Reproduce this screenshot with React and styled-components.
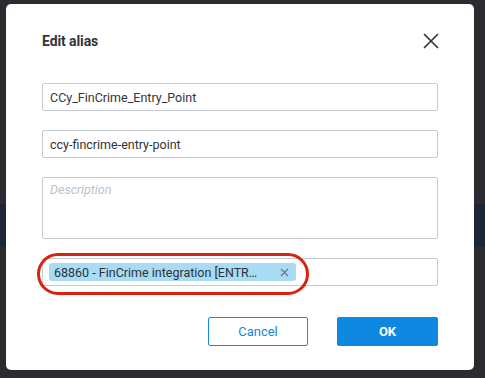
import React from "react";
import styled, { createGlobalStyle } from "styled-components";

const Global = createGlobalStyle`
  html, body { margin: 0; padding: 0; }
  body {
    width: 485px;
    height: 378px;
    overflow: hidden;
    font-family: Roboto, "Liberation Sans", Arial, sans-serif;
    background: linear-gradient(
      to bottom,
      #2c2c30 0px,
      #2c2c30 204px,
      #1b2636 204px,
      #1b2636 247px,
      #2c2c30 247px
    );
  }
`;

const Page = styled.div`
  width: 485px;
  height: 378px;
  padding: 4px 11px 0 6px;
  box-sizing: border-box;
`;

const Dialog = styled.div`
  width: 468px;
  height: 366px;
  box-sizing: border-box;
  background: #ffffff;
  border-radius: 5px;
  padding: 28px 36px 24px 36px;
  display: flex;
  flex-direction: column;
`;

const Header = styled.div`
  display: flex;
  align-items: center;
  justify-content: space-between;
  height: 18px;
  margin-bottom: 33px;
`;

const Title = styled.h2`
  margin: 0;
  font-size: 14px;
  font-weight: 700;
  color: #333438;
  letter-spacing: -0.1px;
`;

const CloseButton = styled.button`
  border: none;
  background: none;
  padding: 0;
  width: 16px;
  height: 16px;
  margin-right: -1px;
  display: flex;
  align-items: center;
  justify-content: center;
  cursor: pointer;
`;

const Fields = styled.div`
  display: flex;
  flex-direction: column;
  gap: 19px;
`;

const Field = styled.div`
  box-sizing: border-box;
  width: 396px;
  height: ${(p) => p.$h || 28}px;
  border: 1px solid #c3ccd4;
  border-radius: 2px;
  padding: ${(p) => (p.$multi ? "4px 7px" : "0 7px")};
  display: flex;
  align-items: ${(p) => (p.$multi ? "flex-start" : "center")};
  font-size: 12.5px;
  color: #333438;
`;

const Placeholder = styled.span`
  font-style: italic;
  color: #b9c3cd;
`;

const TagWrap = styled.div`
  position: relative;
  box-sizing: border-box;
  width: 396px;
  height: 28px;
  border: 1px solid #c3ccd4;
  border-radius: 2px;
  padding: 0 6px;
  display: flex;
  align-items: center;
`;

const Tag = styled.span`
  display: inline-flex;
  align-items: center;
  height: 18px;
  width: 247px;
  box-sizing: border-box;
  padding: 0 7px 0 5px;
  border-radius: 3px;
  background: #a8dbf4;
  color: #2c3238;
  font-size: 12.5px;
  justify-content: space-between;
`;

const TagText = styled.span`
  white-space: nowrap;
`;

const TagRemove = styled.span`
  display: flex;
  align-items: center;
`;

const Annotation = styled.div`
  position: absolute;
  left: -6px;
  top: -6px;
  width: 272px;
  height: 42px;
  box-sizing: border-box;
  border: 3px solid #d6240f;
  border-radius: 21px;
  pointer-events: none;
`;

const Actions = styled.div`
  display: flex;
  justify-content: flex-end;
  gap: 29px;
  margin-top: 31px;
`;

const Button = styled.button`
  box-sizing: border-box;
  width: ${(p) => (p.$primary ? 101 : 100)}px;
  height: 29px;
  border-radius: 2px;
  font-family: Roboto, "Liberation Sans", Arial, sans-serif;
  font-size: 13px;
  font-weight: ${(p) => (p.$primary ? 700 : 400)};
  cursor: pointer;
  border: 1px solid ${(p) => (p.$primary ? "#0e88e0" : "#1a8ae0")};
  background: ${(p) => (p.$primary ? "#0e88e0" : "#ffffff")};
  color: ${(p) => (p.$primary ? "#ffffff" : "#1a84d8")};
`;

export default function App() {
  return (
    <>
      <Global />
      <Page>
        <Dialog>
          <Header>
            <Title>Edit alias</Title>
            <CloseButton aria-label="Close">
              <svg width="16" height="16" viewBox="0 0 16 16">
                <path
                  d="M1.5 1.5 L14.5 14.5 M14.5 1.5 L1.5 14.5"
                  stroke="#333438"
                  strokeWidth="1.7"
                  strokeLinecap="round"
                />
              </svg>
            </CloseButton>
          </Header>
          <Fields>
            <Field>CCy_FinCrime_Entry_Point</Field>
            <Field>ccy-fincrime-entry-point</Field>
            <Field $h={62} $multi>
              <Placeholder>Description</Placeholder>
            </Field>
            <TagWrap>
              <Tag>
                <TagText>68860 - FinCrime integration [ENTR…</TagText>
                <TagRemove>
                  <svg width="9" height="9" viewBox="0 0 9 9">
                    <path
                      d="M1 1 L8 8 M8 1 L1 8"
                      stroke="#6b7680"
                      strokeWidth="1.2"
                    />
                  </svg>
                </TagRemove>
              </Tag>
              <Annotation />
            </TagWrap>
          </Fields>
          <Actions>
            <Button>Cancel</Button>
            <Button $primary>OK</Button>
          </Actions>
        </Dialog>
      </Page>
    </>
  );
}
